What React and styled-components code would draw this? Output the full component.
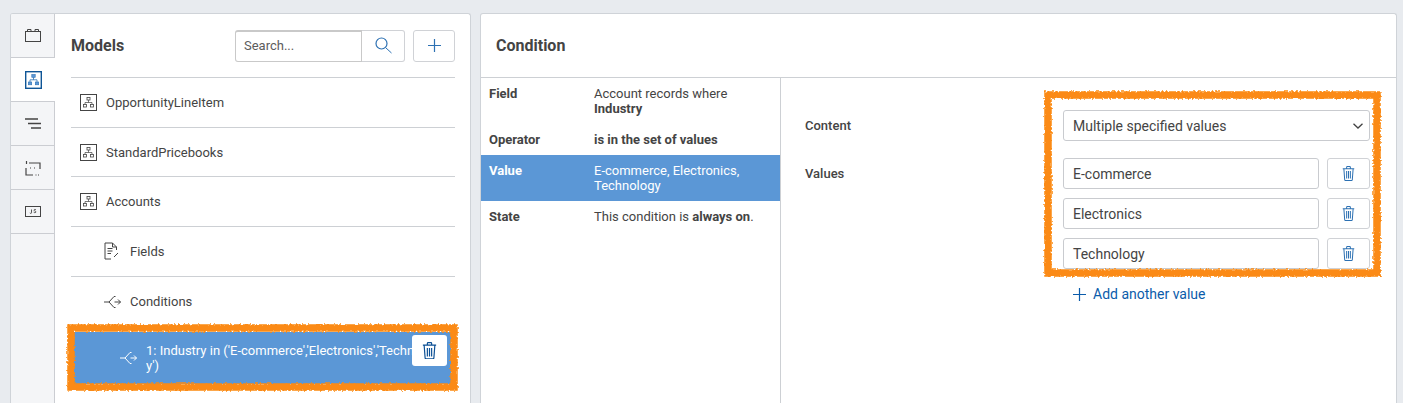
import React from "react";
import styled, { createGlobalStyle } from "styled-components";

const Global = createGlobalStyle`
  html, body { margin: 0; padding: 0; height: 403px; overflow: hidden; background: #e8ebef; }
  body { font-family: Roboto, "Liberation Sans", sans-serif; color: #444444; -webkit-font-smoothing: antialiased; }
`;

const Page = styled.div`
  position: relative;
  display: flex;
  gap: 9px;
  height: 403px;
  box-sizing: border-box;
  padding: 13px 6px 0 10px;
  overflow: hidden;
`;
const Panel = styled.section`
  background: #fff;
  border: 1px solid #cfd3d8;
  border-bottom: 0;
  border-radius: 3px 3px 0 0;
  box-sizing: border-box;
  display: flex;
  overflow: hidden;
`;
const LeftPanel = styled(Panel)`
  width: 461px;
`;
const RightPanel = styled(Panel)`
  flex: 1;
  flex-direction: column;
`;
const TabRail = styled.nav`
  width: 44px;
  box-sizing: border-box;
  flex: none;
  display: flex;
  flex-direction: column;
  background: #f4f5f7;
  border-right: 1px solid #cbcdd2;
`;
const Tab = styled.div`
  height: 44px;
  flex: none;
  box-sizing: border-box;
  display: flex;
  align-items: center;
  justify-content: center;
  background: ${p => (p.$active ? "#fff" : "#f4f5f7")};
  border-bottom: 1px solid #cbcdd2;
  margin-right: ${p => (p.$active ? "-1px" : "0")};
  color: #444444;
`;
const ModelsColumn = styled.div`
  flex: 1;
  min-width: 0;
  padding: 0 15px 0 16px;
`;
const ModelsHeader = styled.header`
  height: 64px;
  box-sizing: border-box;
  display: flex;
  align-items: center;
  justify-content: space-between;
  border-bottom: 1px solid #cdd0d4;
`;
const Title = styled.h2`
  margin: 0;
  font-size: 16px;
  line-height: 20px;
  font-weight: 700;
  color: #444444;
`;
const Tools = styled.div`
  display: flex;
  gap: 8px;
`;
const SearchGroup = styled.div`
  display: flex;
  height: 32px;
`;
const SearchInput = styled.div`
  width: 127px;
  box-sizing: border-box;
  border: 1px solid #c9c9c9;
  border-top-width: 2px;
  border-radius: 3px 0 0 3px;
  padding: 0 8px;
  line-height: 28px;
  font-size: 13px;
  color: #5c5c5c;
`;
const IconButton = styled.div`
  box-sizing: border-box;
  width: ${p => p.$w || 42}px;
  height: ${p => p.$h || 32}px;
  border: 1px solid #d0d2d6;
  border-radius: ${p => p.$radius || "3px"};
  border-left-width: ${p => (p.$joined ? 0 : 1)}px;
  display: flex;
  align-items: center;
  justify-content: center;
  background: #fff;
  color: #2d71b3;
`;
const Row = styled.div`
  height: 49.7px;
  box-sizing: border-box;
  display: flex;
  align-items: center;
  gap: 9px;
  padding-left: ${p => (p.$child ? 33 : 9)}px;
  font-size: 13px;
  color: #444444;
  border-bottom: ${p => (p.$plain ? "0" : "1px solid #cdd0d4")};
`;
const SelectedRow = styled.div`
  position: relative;
  height: 52px;
  margin: 5.500px 4px 0 1px;
  background: #5b97d6;
  color: #fff;
  display: flex;
  align-items: center;
  padding-left: 48px;
  gap: 9px;
  font-size: 13px;
  line-height: 15px;
`;
const SelectedText = styled.div`
  width: 298px;
  flex: none;
  word-break: break-all;
  overflow: hidden;
  height: 30px;
`;
const FloatingDelete = styled(IconButton)`
  position: absolute;
  right: 4px;
  top: 3px;
  width: 35px;
  height: 31px;
  color: #0b4f94;
  border: 0;
`;
const ConditionHeader = styled.header`
  height: 64px;
  flex: none;
  box-sizing: border-box;
  padding-left: 15px;
  display: flex;
  align-items: center;
  border-bottom: 1px solid #cdd0d4;
`;
const ConditionBody = styled.div`
  flex: 1;
  display: flex;
  min-height: 0;
`;
const Summary = styled.div`
  width: 300px;
  box-sizing: border-box;
  flex: none;
  border-right: 1px solid #cdd0d4;
`;
const SummaryRow = styled.div`
  display: grid;
  grid-template-columns: 105px 1fr;
  padding: ${p => p.$pad || "8px"};
  font-size: 13px;
  line-height: 15px;
  background: ${p => (p.$active ? "#5b97d6" : "transparent")};
  color: ${p => (p.$active ? "#fff" : "#444444")};
`;
const Form = styled.div`
  flex: 1;
  display: grid;
  grid-template-columns: 258px 307px;
  grid-auto-rows: min-content;
  padding: 32px 0 0 24px;
  row-gap: 17px;
  font-size: 14px;
  color: #444444;
`;
const FieldLabel = styled.label`
  font-size: 13px;
  font-weight: 500;
  line-height: 31px;
`;
const Control = styled.div`
  height: 31px;
  box-sizing: border-box;
  border: 1px solid #c9cbcf;
  border-radius: 3px;
  padding: 0 6px 0 9px;
  display: flex;
  align-items: center;
  justify-content: space-between;
  background: #fff;
  font-size: 14px;
  flex: ${p => (p.$grow ? 1 : "none")};
`;
const ValuesStack = styled.div`
  display: flex;
  flex-direction: column;
  gap: 9px;
`;
const ValueRow = styled.div`
  display: flex;
  gap: 8px;
`;
const AddLink = styled.div`
  display: flex;
  align-items: center;
  gap: 7px;
  padding-left: 10px;
  margin-top: 17px;
  height: 16px;
  color: #0b5cab;
  font-size: 14px;
`;
const Scribble = styled.svg`
  position: absolute;
  left: 0;
  top: 0;
  pointer-events: none;
`;

const Stroke = { fill: "none", stroke: "currentColor", strokeWidth: 1 };

const Hier = () => (
  <svg width="17" height="17" viewBox="0 0 17 17" fill="none" stroke="currentColor" strokeWidth="1">
    <rect x=".5" y=".5" width="16" height="16" />
    <rect x="7" y="3.500" width="3" height="2.500" strokeWidth=".8" />
    <rect x="3.500" y="10.500" width="3" height="2.500" strokeWidth=".8" />
    <rect x="10.500" y="10.500" width="3" height="2.500" strokeWidth=".8" />
    <path d="M8.500 6v2.500M5 10.500V8.500h7v2" strokeWidth=".7" />
  </svg>
);
const HierActive = () => (
  <svg width="17" height="18" viewBox="0 0 17 18" fill="none">
    <rect x=".7" y=".7" width="15.600" height="16.600" stroke="#0f5596" strokeWidth="1.400" />
    <g fill="#5b97d6" stroke="#2d71b3" strokeWidth=".6">
      <rect x="6.800" y="3.500" width="3.400" height="2.800" />
      <rect x="3.300" y="11" width="3.400" height="2.800" />
      <rect x="10.300" y="11" width="3.400" height="2.800" />
    </g>
    <path d="M8.500 6.300v2.500M5 11V8.800h7V11" stroke="#2d71b3" strokeWidth=".8" />
  </svg>
);
const Branch = ({ color }) => (
  <svg width="17" height="14" viewBox="0 0 17 14" fill="none" stroke={color || "currentColor"} strokeWidth="1">
    <path d="M0 7h5L10 1.500h1.500M5 7l5 5.500h1.500M10.500 7h6M14 4.500L16.500 7 14 9.500" />
  </svg>
);
const Trash = ({ size = 14, sw = 1.1 }) => (
  <svg width={size} height={size * 1.17} viewBox="0 0 14 16.400" fill="none" stroke="currentColor" strokeWidth={sw}>
    <path d="M.8 3h12.400M5 3V1.300c0-.4.300-.7.700-.7h2.600c.4 0 .7.300.7.700V3M2 3l.9 11.800c0 .5.400.9 1 .9h6.200c.6 0 1-.4 1-.9L12 3M5 5.500v8M7 5.500v8M9 5.500v8" />
  </svg>
);
const Plus = ({ size = 14 }) => (
  <svg width={size} height={size} viewBox="0 0 14 14" fill="none" stroke="currentColor" strokeWidth="1.300">
    <path d="M7 0v14M0 7h14" />
  </svg>
);

export default function App() {
  return (
    <>
      <Global />
      <Page>
        <LeftPanel>
          <TabRail>
            <Tab>
              <svg width="16" height="13" viewBox="0 0 16 13" {...Stroke}>
                <rect x=".5" y="2.500" width="15" height="10" />
                <path d="M2.500 2.500V.5h3.500v2M10 2.500V.5h3.500v2" />
              </svg>
            </Tab>
            <Tab $active>
              <HierActive />
            </Tab>
            <Tab>
              <svg width="16" height="11" viewBox="0 0 16 11" fill="none" stroke="currentColor" strokeWidth="1.700">
                <path d="M0 1h13M3 5.500h13M6 10h10" />
              </svg>
            </Tab>
            <Tab>
              <svg width="16" height="16" viewBox="0 0 16 16" fill="none" stroke="currentColor" strokeWidth="1.200">
                <path d="M4 3h11v6M1 8v7h7M10.500 15h1M13 15h1M5 8h1M9 8h1M1.500 1v3" />
              </svg>
            </Tab>
            <Tab>
              <svg width="16" height="11" viewBox="0 0 16 11" fill="none" stroke="currentColor">
                <rect x=".5" y=".5" width="15" height="10" />
                <path d="M6.500 3.500v3.300c0 .8-1.400.8-1.500 0M11 3.800c-.7-.7-2.200-.4-2 .5.200.9 2.100.7 2 1.700-.1.800-1.700.9-2.300.2" strokeWidth=".9" />
              </svg>
            </Tab>
          </TabRail>
          <ModelsColumn>
            <ModelsHeader>
              <Title>Models</Title>
              <Tools>
                <SearchGroup>
                  <SearchInput>Search...</SearchInput>
                  <IconButton $w={43} $joined $radius="0 3px 3px 0">
                    <svg width="17" height="17" viewBox="0 0 17 17" fill="none" stroke="currentColor">
                      <circle cx="6.500" cy="6.500" r="5.500" strokeWidth="1.200" />
                      <path d="M11 11l5.500 5" strokeWidth="1" />
                    </svg>
                  </IconButton>
                </SearchGroup>
                <IconButton $w={42}>
                  <Plus size={13} />
                </IconButton>
              </Tools>
            </ModelsHeader>
            <Row><Hier />OpportunityLineItem</Row>
            <Row><Hier />StandardPricebooks</Row>
            <Row><Hier />Accounts</Row>
            <Row $child>
              <svg width="17" height="18" viewBox="0 0 17 18" fill="none" stroke="currentColor" strokeWidth="1">
                <path d="M7 17H1V1h7.500L12.500 5v3M8.500 1v4h4M3.500 6.500h5M3.500 9h5M3.500 11.500h3.500M10 15l4-4" />
              </svg>
              Fields
            </Row>
            <Row $child $plain><Branch />Conditions</Row>
            <SelectedRow>
              <Branch color="#fff" />
              <SelectedText>1: Industry in ('E-commerce','Electronics','Technology')</SelectedText>
              <FloatingDelete><Trash size={15} /></FloatingDelete>
            </SelectedRow>
          </ModelsColumn>
        </LeftPanel>
        <RightPanel>
          <ConditionHeader><Title>Condition</Title></ConditionHeader>
          <ConditionBody>
            <Summary>
              <SummaryRow $pad="8px 8px 9px 8px">
                <strong>Field</strong>
                <span>Account records where <strong>Industry</strong></span>
              </SummaryRow>
              <SummaryRow $pad="7px 8px 8px 8px">
                <strong>Operator</strong>
                <strong>is in the set of values</strong>
              </SummaryRow>
              <SummaryRow $active>
                <strong>Value</strong>
                <span>E-commerce, Electronics, Technology</span>
              </SummaryRow>
              <SummaryRow>
                <strong>State</strong>
                <span>This condition is <strong>always on</strong>.</span>
              </SummaryRow>
            </Summary>
            <Form>
              <FieldLabel>Content</FieldLabel>
              <Control>
                Multiple specified values
                <svg width="10" height="6" viewBox="0 0 10 6" fill="none" stroke="currentColor" strokeWidth="1.300">
                  <path d="M.5.700L5 5 9.500.7" />
                </svg>
              </Control>
              <FieldLabel>Values</FieldLabel>
              <div>
                <ValuesStack>
                  {["E-commerce", "Electronics", "Technology"].map(v => (
                    <ValueRow key={v}>
                      <Control $grow>{v}</Control>
                      <IconButton $w={43} $h={31}><Trash size={13} /></IconButton>
                    </ValueRow>
                  ))}
                </ValuesStack>
                <AddLink><Plus size={13} />Add another value</AddLink>
              </div>
            </Form>
          </ConditionBody>
        </RightPanel>
        <Scribble width="1403" height="403">
          <defs>
            <filter id="rough" x="-5%" y="-20%" width="110%" height="140%">
              <feTurbulence type="fractalNoise" baseFrequency="0.5" numOctaves="2" seed="4" />
              <feDisplacementMap in="SourceGraphic" scale="4" />
            </filter>
          </defs>
          <g fill="none" stroke="#fb8a12" strokeWidth="7.500" filter="url(#rough)">
            <rect x="1048" y="95" width="329" height="178" />
            <rect x="71" y="328" width="383" height="59" />
          </g>
        </Scribble>
      </Page>
    </>
  );
}
